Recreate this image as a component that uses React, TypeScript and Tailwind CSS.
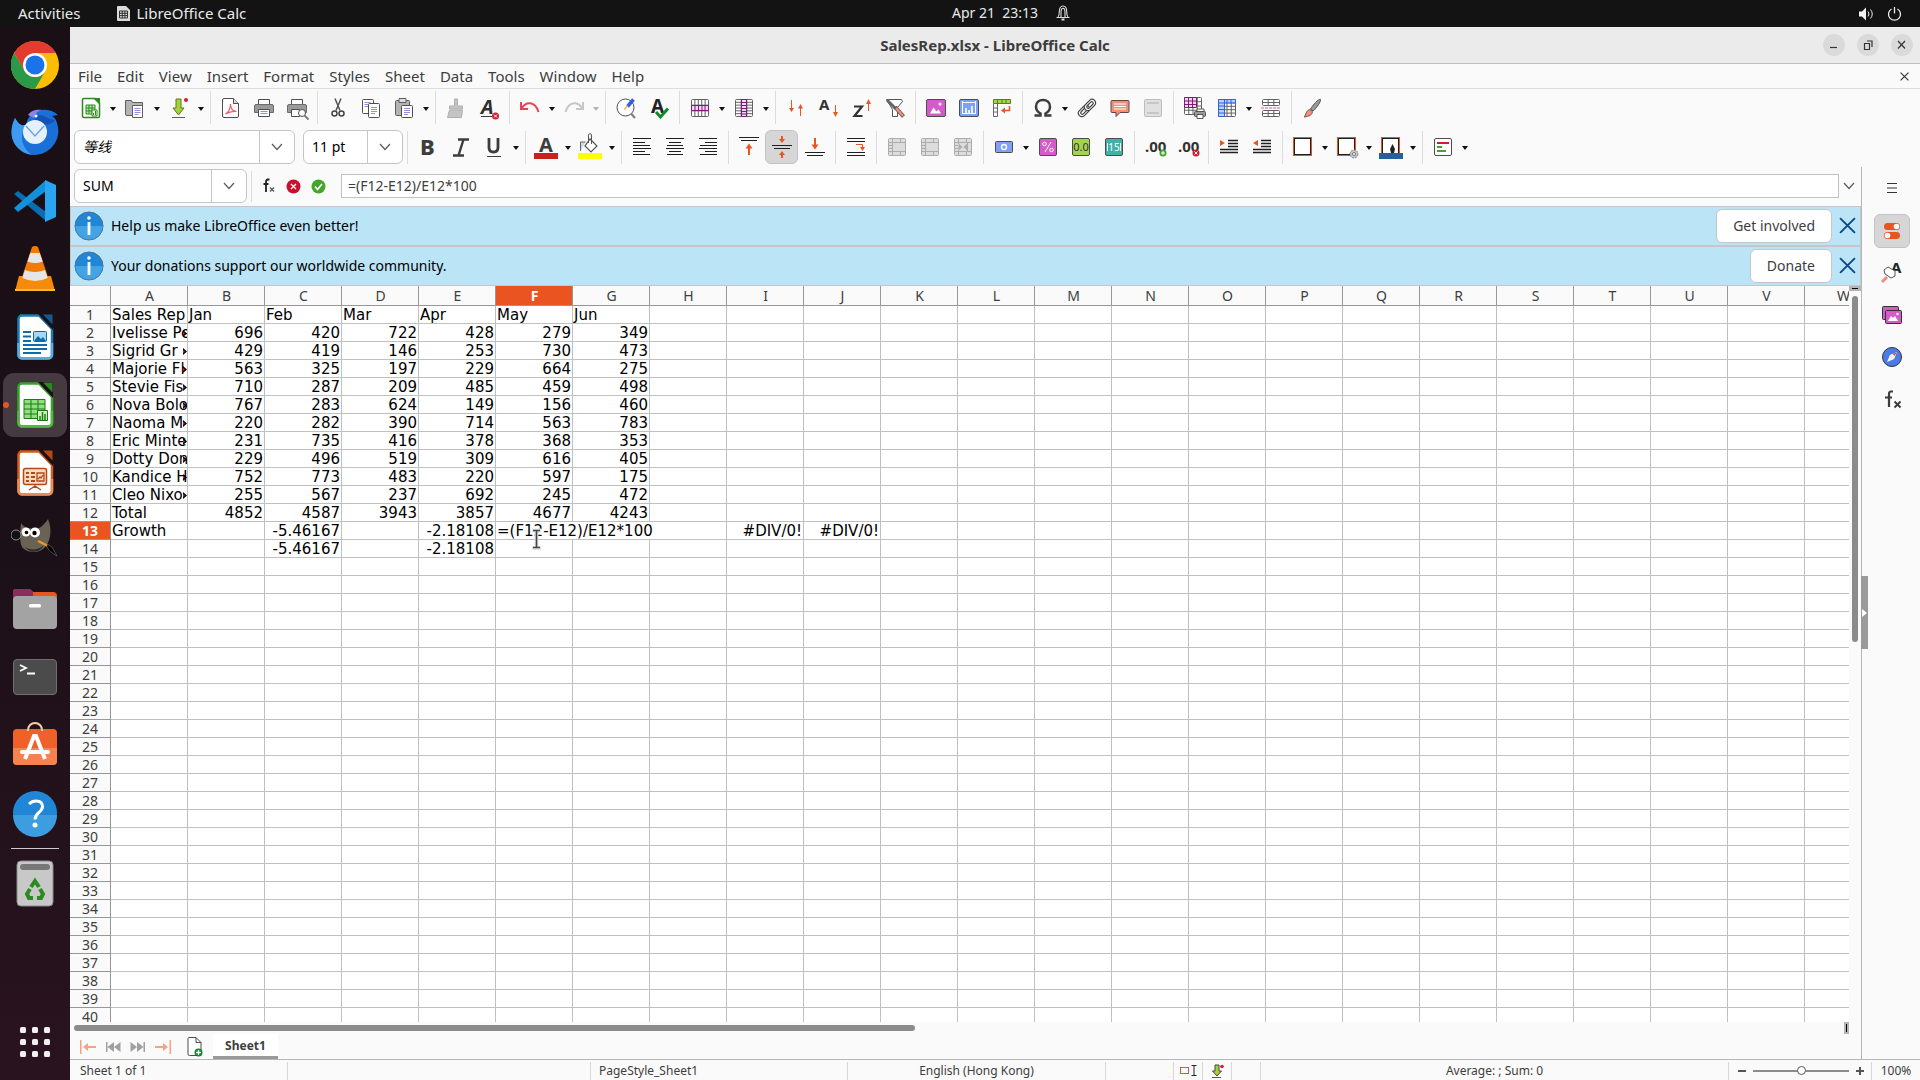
import { type ReactNode } from "react";

const INK = "#3d3d3d";
const ORANGE = "#e95420";

const gridLines = (x: number, y: number, w: number, h: number, cols: number, rows: number, color: string) => {
  const parts: string[] = [];
  for (let i = 1; i < cols; i++) parts.push(`M${x + (w / cols) * i} ${y}v${h}`);
  for (let i = 1; i < rows; i++) parts.push(`M${x} ${y + (h / rows) * i}h${w}`);
  return (
    <>
      <rect x={x} y={y} width={w} height={h} rx="1" fill="#fff" stroke={color} />
      <path d={parts.join("")} stroke={color} />
    </>
  );
};

const mergeBase = (
  <>
    <rect x="3.5" y="3.5" width="17" height="17" rx="1" fill="#dcdcdc" stroke="#adadad" />
    <path d="M3.5 7.5h17M3.5 16.5h17M7.5 3.5v17M15.5 3.5v4M15.5 16.5v4M3.5 10.5h4M3.5 13.5h4" stroke="#adadad" />
  </>
);

const borderBox = (
  <>
    <rect x="2.5" y="2.5" width="18" height="18" fill="none" stroke={ORANGE} />
    <rect x="3.5" y="3.5" width="16" height="16" fill="#fff" stroke="#1f1f1f" />
  </>
);

const icons: Record<string, ReactNode> = {
  new: (
    <>
      <path d="M5 2.500h11l4.500 4.500V20a1.500 1.500 0 0 1-1.500 1.500H5A1.500 1.500 0 0 1 3.500 20V4A1.500 1.500 0 0 1 5 2.500z" fill="#fff" stroke="#2b8a1e" strokeWidth="1.500" />
      <path d="M14 2h7v7z" fill="#2b8a1e" />
      <path d="M7 9h9v9H7zM7 12h9M7 15h9M10 9v9M13 9v9" stroke="#2b8a1e" fill="#b9e8ae" />
      <path d="M13 14h5v6h-5z" fill="#fff" stroke="#2b8a1e" />
      <path d="M14.500 19v-2M16.500 19v-4" stroke="#2b8a1e" />
    </>
  ),
  open: (
    <>
      <path d="M2.500 4.500h6l1 2h10v13H4a1.500 1.500 0 0 1-1.500-1.500z" fill="#b4b4b4" stroke="#5e5e5e" />
      <path d="M9.500 9.500h10v12h-10z" fill="#fff" stroke="#5e5e5e" />
      <path d="M11.500 12.500h6M11.500 14.500h6M11.500 16.500h6M11.500 18.500h4" stroke="#8f93dd" />
    </>
  ),
  save: (
    <>
      <path d="M9 3h5v9h3l-5.500 7L6 12h3z" fill="#a4d13a" stroke="#5a7a1c" />
      <path d="M5 21.500h13" stroke="#5e5e5e" />
      <circle cx="19" cy="4" r="2" fill="#d01c33" />
    </>
  ),
  pdf: (
    <>
      <path d="M5 2.500h9.500l5 5V20a1.500 1.500 0 0 1-1.500 1.500H5A1.500 1.500 0 0 1 3.500 20V4A1.500 1.500 0 0 1 5 2.500z" fill="#fff" stroke="#4d4d4d" />
      <path d="M14.500 2.500v5h5" fill="#ddd" stroke="#4d4d4d" />
      <path d="M6.500 18c3-2 5-6 5-10 0 5 2 7 6 7.500-4-.5-7 0-11 2.500z" fill="none" stroke="#ea5a6a" strokeWidth="1.200" />
    </>
  ),
  print: (
    <>
      <path d="M6.500 3.500h11v5h-11z" fill="#fff" stroke="#4d4d4d" />
      <path d="M4 8.500h16a1.500 1.500 0 0 1 1.500 1.500v6.500h-19V10A1.500 1.500 0 0 1 4 8.500z" fill="#9a9a9a" stroke="#6b6b6b" />
      <path d="M6.500 13.500h11v7h-11z" fill="#fff" stroke="#4d4d4d" />
      <path d="M8.500 15.500h7M8.500 17.500h7" stroke="#8f93dd" />
    </>
  ),
  preview: (
    <>
      <path d="M6.500 3.500h11v5h-11z" fill="#fff" stroke="#4d4d4d" />
      <path d="M4 8.500h16a1.500 1.500 0 0 1 1.500 1.500v6.500h-19V10A1.500 1.500 0 0 1 4 8.500z" fill="#9a9a9a" stroke="#6b6b6b" />
      <path d="M6.500 13.500h8v7h-8z" fill="#fff" stroke="#4d4d4d" />
      <circle cx="17" cy="17" r="3.500" fill="#fff" stroke="#4d4d4d" />
      <path d="M19.500 19.500l4 4" stroke="#777" strokeWidth="1.800" />
    </>
  ),
  cut: (
    <>
      <path d="M9 2.500l5 12M15 2.500l-5 12" stroke="#555" strokeWidth="1.500" />
      <circle cx="8.500" cy="17.500" r="2.500" fill="none" stroke="#444" strokeWidth="1.500" />
      <circle cx="15.500" cy="17.500" r="2.500" fill="none" stroke="#444" strokeWidth="1.500" />
    </>
  ),
  copy: (
    <>
      <rect x="3.500" y="3.500" width="11" height="14" rx="1" fill="#fff" stroke="#4d4d4d" />
      <path d="M5.500 6.500h6M5.500 8.500h6M5.500 10.500h6" stroke="#8f93dd" />
      <rect x="9.500" y="7.500" width="11" height="14" rx="1" fill="#fff" stroke="#4d4d4d" />
      <path d="M12 11.500h6M12 13.500h6M12 15.500h6M12 17.500h4" stroke="#8f93dd" />
    </>
  ),
  paste: (
    <>
      <rect x="3.500" y="4.500" width="14" height="15" rx="1" fill="#b4b4b4" stroke="#5e5e5e" />
      <path d="M7 2.500h7v4H7z" fill="#ddd" stroke="#5e5e5e" />
      <rect x="9.500" y="9.500" width="11" height="12" rx="1" fill="#fff" stroke="#4d4d4d" />
      <path d="M12 12.500h6M12 14.500h6M12 16.500h6M12 18.500h4" stroke="#8f93dd" />
    </>
  ),
  clone: <path d="M10.500 3h3v7h5v3h-13v-3h5zM5.500 14h13l-1 7.500h-14z" fill="#c4c4c4" stroke="#b0b0b0" />,
  clear: (
    <>
      <text x="4" y="18" fontSize="20" fontWeight="700" fontStyle="italic" fill="#2e2e2e">A</text>
      <path d="M4 20.500h12" stroke={INK} />
      <circle cx="18.500" cy="20" r="3.500" fill="#d01c33" />
      <path d="M17 18.500l3 3M20 18.500l-3 3" stroke="#fff" />
    </>
  ),
  undo: <path d="M3 6v7h7M3.500 12.500C8 5 17 5 20.500 16" fill="none" stroke="#ea4255" strokeWidth="2" />,
  redo: <path d="M21 6v7h-7M20.500 12.500C16 5 7 5 3.500 16" fill="none" stroke="#c6c6c6" strokeWidth="2" />,
  find: (
    <>
      <circle cx="11.500" cy="11.500" r="8.500" fill="#fff" stroke="#4d4d4d" />
      <path d="M17 17.500l4 4.500" stroke="#808080" strokeWidth="2.200" />
      <path d="M19.500 3.500l-6 7" stroke="#2f62dc" strokeWidth="3.500" />
      <path d="M13.500 9.500l-3 4" stroke="#f0b070" strokeWidth="1.500" />
    </>
  ),
  spell: (
    <>
      <text x="4" y="17" fontSize="19" fontWeight="700" fill="#222">A</text>
      <path d="M9 16l4.500 5L21 12.500" fill="none" stroke="#13882a" strokeWidth="3" />
    </>
  ),
  row: (
    <>
      {gridLines(3.5, 3.5, 17, 17, 5, 3, "#636363")}
      <path d="M3.500 9.500h17v5h-17zM7 9.500v5M10.500 9.500v5M14 9.500v5M17 9.500v5" fill="#f4d3f1" stroke="#7a1c78" />
    </>
  ),
  column: (
    <>
      {gridLines(3.5, 3.5, 17, 17, 3, 6, "#636363")}
      <path d="M9.500 3.500h5v17h-5zM9.500 6.500h5M9.500 9.500h5M9.500 12.500h5M9.500 15.500h5M9.500 18h5" fill="#f4d3f1" stroke="#7a1c78" />
    </>
  ),
  sort: (
    <>
      <path d="M7.500 4v8" stroke={ORANGE} />
      <path d="M5 12h5l-2.500 4z" fill={ORANGE} />
      <path d="M16.500 20v-8" stroke={ORANGE} />
      <path d="M14 12.500h5L16.500 8z" fill={ORANGE} />
    </>
  ),
  asc: (
    <>
      <text x="2" y="14" fontSize="15" fontWeight="700" fill="#333">A</text>
      <path d="M18.500 9v8" stroke={ORANGE} />
      <path d="M16 16h5l-2.500 5z" fill={ORANGE} />
    </>
  ),
  desc: (
    <>
      <path d="M4 10.500h8L4.500 20H12.500" fill="none" stroke="#333" strokeWidth="2.200" />
      <path d="M18.500 15V6" stroke={ORANGE} />
      <path d="M16 8h5l-2.500-5z" fill={ORANGE} />
    </>
  ),
  filter: (
    <>
      <path d="M3.500 3.500h15l1 2-5 6v9h-5v-7z" fill="#fff" stroke="#555" />
      <path d="M4 4l9 9" stroke="#666" strokeWidth="3" />
      <path d="M12 11l8.500 9.500" stroke="#555" strokeWidth="4" />
      <path d="M13 12l7 8" stroke="#f58b7a" strokeWidth="2.500" />
    </>
  ),
  image: (
    <>
      <rect x="2.500" y="3.500" width="19" height="17" rx="1.500" fill="#d55bcb" stroke="#4d4d4d" />
      <path d="M6 17.500l3.500-6 3 4 2-2 2.500 4z" fill="#fff" />
      <circle cx="16" cy="8" r="1.500" fill="#fff" />
    </>
  ),
  chart: (
    <>
      <rect x="2.500" y="3.500" width="19" height="17" rx="1.500" fill="#7ea2f5" stroke="#4d4d4d" />
      <path d="M5 6.500h14M5.500 5v13M5 17.500h14M18.500 5v13" stroke="#fff" />
      <path d="M9 17v-5M12 17v-3M15 17V10" stroke="#fff" strokeWidth="1.600" />
    </>
  ),
  pivot: (
    <>
      <path d="M3.500 3.500h17v4h-17z" fill="#a4d44b" stroke="#5c7c25" />
      <path d="M7.500 3.500v4M12 3.500v4M16 3.500v4" stroke="#5c7c25" />
      <path d="M3.500 7.500h4v13h-4zM3.500 12h4M3.500 16h4" fill="#fff" stroke="#666" />
      <path d="M19.500 10v4.500H14" fill="none" stroke={ORANGE} strokeWidth="1.500" />
      <path d="M15 11.500v6l-4-3z" fill={ORANGE} />
    </>
  ),
  omega: <path d="M3.500 19.500h6v-2C6.500 16 5 13.500 5 10.800 5 6.500 8 4 12 4s7 2.500 7 6.800c0 2.700-1.500 5.200-4.500 6.700v2h6" fill="none" stroke={INK} strokeWidth="2.500" />,
  link: (
    <g fill="#fff" stroke="#444" strokeWidth="1.200">
      <path fillRule="evenodd" transform="rotate(-45 9 15)" d="M6 11.500h6a3.500 3.500 0 0 1 0 7H6a3.500 3.500 0 0 1 0-7zM6.500 13.500a1.500 1.500 0 0 0 0 3h5a1.500 1.500 0 0 0 0-3z" />
      <path fillRule="evenodd" transform="rotate(-45 15 9)" d="M12 5.500h6a3.500 3.500 0 0 1 0 7h-6a3.500 3.500 0 0 1 0-7zM12.500 7.500a1.500 1.500 0 0 0 0 3h5a1.500 1.500 0 0 0 0-3z" />
    </g>
  ),
  comment: (
    <>
      <path d="M4 4.500h16a1 1 0 0 1 1 1v10a1 1 0 0 1-1 1h-8l-4 4v-4H4a1 1 0 0 1-1-1v-10a1 1 0 0 1 1-1z" fill="#f58b7a" stroke="#5b4a48" />
      <path d="M6 8h12M6 10.500h12M6 13h12" stroke="#fff" />
    </>
  ),
  headers: (
    <>
      <rect x="3.500" y="3.500" width="17" height="17" rx="1.500" fill="#e0e0e0" stroke="#bdbdbd" />
      <path d="M6 7h12M6 17h12" stroke="#bdbdbd" strokeWidth="1.500" />
    </>
  ),
  printarea: (
    <>
      {gridLines(2.5, 1.5, 17, 17, 4, 4, "#636363")}
      <path d="M2.500 1.500h12v10h-12zM6.500 1.500v10M10.500 1.500v10M2.500 5h12M2.500 8.500h12" fill="#f4d3f1" stroke="#7a1c78" />
      <path d="M15 13h7v4h-7z" fill="#fff" stroke="#555" />
      <rect x="12.500" y="15.500" width="11" height="5" rx="1" fill="#9a9a9a" stroke="#555" />
      <path d="M15 18.500h6v4h-6z" fill="#fff" stroke="#555" />
    </>
  ),
  freeze: (
    <>
      {gridLines(3.5, 3.5, 17, 17, 4, 5, "#636363")}
      <path d="M3.500 3.500h17v3.400h-11v13.600h-6zM3.500 7h6M3.500 10h6M3.500 13.500h6M3.500 17h6M12 3.500v3.400M16 3.500v3.400M9.500 3.500v3.400" fill="#bcd0fb" stroke="#2f62dc" />
    </>
  ),
  split: (
    <>
      {gridLines(3.5, 3.5, 17, 6, 3, 2, "#636363")}
      {gridLines(3.5, 14.5, 17, 6, 3, 2, "#636363")}
      <path d="M2 12h20" stroke="#d55bcb" strokeDasharray="3 1" />
    </>
  ),
  draw: (
    <>
      <path d="M20.500 3.500c1 1-4 9-7.500 11.500l-2.500-2C12.500 9.500 19 2 20.500 3.500z" fill="#9a9a9a" stroke="#555" />
      <path d="M10 13.500l2.500 2c0 3-3 5-8.500 5.500 2-1.500 2-7 6-7.500z" fill="#f58b7a" stroke="#7a5550" />
    </>
  ),
  bold: <text x="4" y="20" fontSize="22" fontWeight="800" fill={INK}>B</text>,
  italic: <path d="M9 4.500h11M4 20.500h11M14.500 4.500l-5 16" stroke={INK} strokeWidth="2.400" />,
  underline: (
    <>
      <path d="M7 3v9.500c0 3 1.500 4.500 4.500 4.500s4.500-1.500 4.500-4.500V3" fill="none" stroke={INK} strokeWidth="2.800" />
      <path d="M5 21.500h14" stroke={INK} />
    </>
  ),
  fontcolor: (
    <>
      <text x="5" y="17" fontSize="20" fontWeight="700" fill={INK}>A</text>
      <path d="M0 18h24v6H0z" fill="#c9211e" />
    </>
  ),
  fill: (
    <>
      <path d="M2.500 16V7h5" fill="#bcdff4" stroke="#666" />
      <path d="M12 4l7 7-6 6-6-6z" fill="#fff" stroke="#555" strokeWidth="1.200" />
      <path d="M10.500 8V-.5a2 2 0 0 1 3 0V9" fill="none" stroke="#555" />
      <path d="M0 18h24v6H0z" fill="#ff0" />
    </>
  ),
  left: <path d="M3 3.500h18M3 7.500h12M3 10.500h17M3 13.500h18M3 16.500h12M3 19.500h17" stroke="#1f1f1f" />,
  center: <path d="M3 3.500h18M6 7.500h12M4 10.500h16M3 13.500h18M6 16.500h12M4 19.500h16" stroke="#1f1f1f" />,
  right: <path d="M3 3.500h18M9 7.500h12M4 10.500h17M3 13.500h18M9 16.500h12M4 19.500h17" stroke="#1f1f1f" />,
  top: (
    <>
      <path d="M2 2.500h20M4 5.500h16" stroke="#1f1f1f" />
      <path d="M12 20v-7" stroke={ORANGE} strokeWidth="2" />
      <path d="M8.500 13.500h7L12 8.500z" fill={ORANGE} />
    </>
  ),
  middle: (
    <>
      <path d="M2 10.500h20M4 13.500h16" stroke="#1f1f1f" />
      <path d="M12 1v4M12 23v-4" stroke={ORANGE} strokeWidth="2" />
      <path d="M9 4h6l-3 4zM9 20h6l-3-4z" fill={ORANGE} />
    </>
  ),
  bottom: (
    <>
      <path d="M2 17.500h20M4 20.500h16" stroke="#1f1f1f" />
      <path d="M12 3v7" stroke={ORANGE} strokeWidth="2" />
      <path d="M8.500 9.500h7L12 14.500z" fill={ORANGE} />
    </>
  ),
  wrap: (
    <>
      <path d="M3 3.500h18M3 6.500h18M3 17.500h18M3 20.500h18" stroke="#1f1f1f" />
      <path d="M12 9.500h6.500v3" fill="none" stroke={ORANGE} />
      <path d="M16 12h5l-2.500 4z" fill={ORANGE} />
    </>
  ),
  merge1: mergeBase,
  merge2: mergeBase,
  merge3: (
    <>
      {mergeBase}
      <path d="M7 9h9v6H7z" fill="#dcdcdc" />
      <path d="M16.500 7.500v9M8 9.500l3 2.500-3 2.500zM16 9.500L13 12l3 2.500z" fill="#adadad" stroke="#adadad" />
    </>
  ),
  currency: (
    <>
      <rect x="3.500" y="6.500" width="17" height="11" rx="1" fill="#7ea2f5" stroke="#4d4d4d" />
      <circle cx="12" cy="12" r="2.500" fill="none" stroke="#fff" strokeWidth="1.300" />
    </>
  ),
  percent: (
    <>
      <rect x="3.500" y="3.500" width="17" height="17" rx="1.500" fill="#d55bcb" stroke="#4d4d4d" />
      <circle cx="8.500" cy="9" r="1.800" fill="none" stroke="#fff" />
      <circle cx="15.500" cy="15" r="1.800" fill="none" stroke="#fff" />
      <path d="M15 7l-6 10" stroke="#fff" />
    </>
  ),
  number: (
    <>
      <rect x="3.500" y="3.500" width="17" height="17" rx="1.500" fill="#a4d44b" stroke="#4d4d4d" />
      <text x="12" y="16" fontSize="11" textAnchor="middle" fill="#333">0.0</text>
    </>
  ),
  date: (
    <>
      <rect x="3.500" y="3.500" width="17" height="17" rx="1.500" fill="#41b2a8" stroke="#4d4d4d" />
      <text x="12" y="16" fontSize="10" textAnchor="middle" fill="#fff">15</text>
      <path d="M5.500 8v8M18.500 8v8" stroke="#fff" />
    </>
  ),
  adddec: (
    <>
      <text x="2" y="17" fontSize="15" fontWeight="700" fill="#333">.00</text>
      <circle cx="20" cy="18" r="3.500" fill="#43a52c" />
      <path d="M18 18h4M20 16v4" stroke="#fff" />
    </>
  ),
  deldec: (
    <>
      <text x="2" y="17" fontSize="15" fontWeight="700" fill="#333">.00</text>
      <circle cx="20" cy="18" r="3.500" fill="#d01c33" />
      <path d="M18.500 16.500l3 3M21.500 16.500l-3 3" stroke="#fff" />
    </>
  ),
  indent: (
    <>
      <path d="M11 5.500h10M11 8.500h10M11 11.500h10M3 14.500h18M3 17.500h18" stroke="#1f1f1f" strokeWidth="1.300" />
      <path d="M3 5l5 3-5 3z" fill={ORANGE} />
    </>
  ),
  outdent: (
    <>
      <path d="M11 5.500h10M11 8.500h10M11 11.500h10M3 14.500h18M3 17.500h18" stroke="#1f1f1f" strokeWidth="1.300" />
      <path d="M8 5L3 8l5 3z" fill={ORANGE} />
    </>
  ),
  borders: borderBox,
  borderstyle: (
    <>
      {borderBox}
      <circle cx="19" cy="19" r="4" fill="#c4c4c4" stroke="#888" strokeDasharray="2 1" />
      <circle cx="19" cy="19" r="1.500" fill="#fff" stroke="#777" />
    </>
  ),
  bordercolor: (
    <>
      {borderBox}
      <path d="M13.500 9l2.500 5-1 4h-3l-1-4z" fill="#222" />
      <path d="M0 18h24v6H0z" fill="#2a6099" />
    </>
  ),
  conditional: (
    <>
      <rect x="3.500" y="3.500" width="17" height="17" rx="1.500" fill="#fff" stroke="#4d4d4d" />
      <path d="M6 8h12" stroke="#d01c33" strokeWidth="2" />
      <path d="M6 12h5M6 16h9" stroke="#43a52c" strokeWidth="2" />
    </>
  ),
};

const standardBar = "new ▾ open ▾ save ▾ | pdf print preview | cut copy paste ▾ | clone clear | undo ▾ redo ▿ | find spell | row ▾ column ▾ | sort asc desc filter | image chart pivot | omega ▾ link comment headers | printarea freeze ▾ split | draw".split(" ");
const formatBar = "| bold italic underline ▾ | fontcolor ▾ fill ▾ | left center right | top middle bottom | wrap | merge1 merge2 merge3 | currency ▾ percent number date | adddec deldec | indent outdent | borders ▾ borderstyle ▾ bordercolor ▾ | conditional ▾".split(" ");

const menus = ["File", "Edit", "View", "Insert", "Format", "Styles", "Sheet", "Data", "Tools", "Window", "Help"];

const columns = "ABCDEFGHIJKLMNOPQRSTUVW".split("");

const rows: (string | number)[][] = [
  ["Sales Rep", "Jan", "Feb", "Mar", "Apr", "May", "Jun"],
  ["Ivelisse Pe", 696, 420, 722, 428, 279, 349],
  ["Sigrid Gr", 429, 419, 146, 253, 730, 473],
  ["Majorie Fl", 563, 325, 197, 229, 664, 275],
  ["Stevie Fis", 710, 287, 209, 485, 459, 498],
  ["Nova Bolo", 767, 283, 624, 149, 156, 460],
  ["Naoma M", 220, 282, 390, 714, 563, 783],
  ["Eric Minte", 231, 735, 416, 378, 368, 353],
  ["Dotty Don", 229, 496, 519, 309, 616, 405],
  ["Kandice H", 752, 773, 483, 220, 597, 175],
  ["Cleo Nixo", 255, 567, 237, 692, 245, 472],
  ["Total", 4852, 4587, 3943, 3857, 4677, 4243],
  ["Growth", "", -5.46167, "", -2.18108, "", "", "", "#DIV/0!", "#DIV/0!"],
  ["", "", -5.46167, "", -2.18108],
];

function ToolStrip({ items }: { items: string[] }) {
  return (
    <>
      {items.map((item, i) => {
        if (item === "|") return <div key={i} className="mr-[3px] ml-1 h-[33px] w-px shrink-0 bg-[#dcdcdc]" />;
        if (item === "▾" || item === "▿") {
          return (
            <button key={i} aria-label="More options" className="flex h-[34px] w-[11px] shrink-0 items-center justify-center pt-[3px]">
              <svg width="8" height="5" viewBox="0 0 8 5"><path d="M1 0h6L4 4z" fill={item === "▾" ? "#111" : "#b5b5b5"} /></svg>
            </button>
          );
        }
        return (
          <button
            key={i}
            aria-label={item}
            className={`flex h-[34px] w-[33px] shrink-0 items-center justify-center rounded-md ${item === "middle" ? "border border-[#c2c2c2] bg-[#d6d6d6]" : ""}`}
          >
            <svg width="24" height="24" viewBox="0 0 24 24" fill="none" className="shrink-0 overflow-visible">{icons[item]}</svg>
          </button>
        );
      })}
    </>
  );
}

function Chevron() {
  return (
    <svg width="12" height="8" viewBox="0 0 12 8" fill="none">
      <path d="M1 1l5 5.500L11 1" stroke="#5a5a5a" strokeWidth="1.200" />
    </svg>
  );
}

function Combo({ label, value, className }: { label: string; value: string; className: string }) {
  return (
    <div className={`relative flex h-[34px] shrink-0 items-center rounded-md border border-[#c6c6c6] bg-white ${className}`}>
      <select aria-label={label} defaultValue={value} className="h-full w-full appearance-none bg-transparent pb-px pl-2 text-[14px] text-black">
        <option>{value}</option>
      </select>
      <div className="pointer-events-none absolute inset-y-0 right-0 flex w-[35px] items-center justify-center border-l border-[#c6c6c6]">
        <Chevron />
      </div>
    </div>
  );
}

function CloseX({ size, color, width }: { size: number; color: string; width: number }) {
  return (
    <svg width={size} height={size} viewBox="0 0 16 16">
      <path d="M1 1l14 14M15 1L1 15" stroke={color} strokeWidth={width} />
    </svg>
  );
}

function InfoBar({ text, action }: { text: string; action: string }) {
  return (
    <div className="flex h-10 items-center border border-[#c6c6c6] bg-[#bbe4f6] pr-1 pb-px pl-[3px]">
      <svg width="30" height="30" viewBox="0 0 30 30" className="shrink-0">
        <circle cx="15" cy="15" r="14" fill="#2286d6" stroke="#4a6f96" />
        <path d="M1.500 15h27a13.500 13.500 0 0 1-27 0z" fill="#43a3e3" />
        <circle cx="15" cy="7" r="1.800" fill="#fff" />
        <path d="M15 11v13" stroke="#fff" strokeWidth="2.800" />
      </svg>
      <p className="ml-[7px] flex-1 text-[14px] text-black">{text}</p>
      <button className="h-[34px] rounded-md border border-[#c6c6c6] bg-white px-4 text-[14px] text-[#3d3d3d]">{action}</button>
      <button aria-label="Close" className="ml-[7px]"><CloseX size={17} color="#0b4a86" width={1.8} /></button>
    </div>
  );
}

const docIcon = (dark: string, main: string, light: string, body: ReactNode) => (
  <svg width="48" height="48" viewBox="0 0 48 48" fill="none">
    <path d="M9 2.500h19L41 16v26a3.500 3.500 0 0 1-3.500 3.500h-26A3.500 3.500 0 0 1 7.500 42V6A3.500 3.500 0 0 1 11 2.500z" fill="#fff" stroke={main} strokeWidth="2.500" />
    <path d="M27 1h13.500A1.500 1.500 0 0 1 42 2.500V17z" fill="#1c1017" />
    <path d="M32 1.500h8.500a1 1 0 0 1 1 1v9z" fill={dark} />
    <path d="M7.500 30v12a3.500 3.500 0 0 0 3.500 3.500h26.500A3.500 3.500 0 0 0 41 42V30" stroke={light} strokeWidth="2.500" />
    {body}
  </svg>
);

const apps: { name: string; active?: boolean; icon: ReactNode }[] = [
  {
    name: "Google Chrome",
    icon: (
      <svg width="48" height="48" viewBox="0 0 48 48">
        <circle cx="24" cy="24" r="24" fill="#fbbc04" />
        <path d="M24 12h20.800A24 24 0 0 0 3.200 12l10.400 18z" fill="#e33b2e" />
        <path d="M3.200 12A24 24 0 0 0 24 48l10.400-18A12 12 0 0 1 13.600 30z" fill="#2a9a48" />
        <circle cx="24" cy="24" r="12" fill="#fff" />
        <circle cx="24" cy="24" r="9.500" fill="#1a73e8" />
      </svg>
    ),
  },
  {
    name: "Thunderbird",
    icon: (
      <svg width="48" height="48" viewBox="0 0 48 48">
        <path d="M4 9c-5 10-5 22 3 30 8 9 23 9 32 1 8-7 10-17 7-26-1-4-3-6-5-7l6-1C41 0 29-1 22 4c-5 4-6 8-7 12-4 1-7 0-11-7z" fill="#1a6fd8" />
        <path d="M4 9c-5 10-5 22 3 30 4 4 9 6 14 7C10 38 8 26 15 16 11 17 8 16 4 9z" fill="#3d9bf0" />
        <path d="M28 6c6 0 10 5 16 5-3 5-12 6-18 3-3-3-2-7 2-8z" fill="#1552b8" />
        <path d="M17 6c3-5 9-6 14-5-5 1-7 4-8 8z" fill="#8d84e8" />
        <circle cx="24" cy="23" r="12" fill="#e4f1fd" />
        <path d="M15 17l9 10 9-10" fill="none" stroke="#6aa6e4" strokeWidth="1.500" />
        <circle cx="25" cy="7" r="1.500" fill="#fff" />
      </svg>
    ),
  },
  {
    name: "Visual Studio Code",
    icon: (
      <svg width="48" height="48" viewBox="0 0 48 48">
        <path d="M3 17l4-3 28 21v9z" fill="#0b6cb0" />
        <path d="M3 31l4 4L35 14V3z" fill="#1190dc" />
        <path d="M34 3l11 5v32l-11 5z" fill="#2aa5f2" />
      </svg>
    ),
  },
  {
    name: "VLC",
    icon: (
      <svg width="48" height="48" viewBox="0 0 48 48">
        <path d="M8 31h32l4 15H4z" fill="#f58a0b" />
        <path d="M4 44h40v2H4z" fill="#ffb833" />
        <path d="M21 2q3-2 6 0l10 30q-13 7-26 0z" fill="#f07c06" />
        <path d="M19.300 8h9.400l3 8.500q-7.500 3-15.200 0zM14 25q10 4 20 0l2.700 8q-12.500 6-25.300 0z" fill="#e6e6e6" />
      </svg>
    ),
  },
  {
    name: "LibreOffice Writer",
    icon: docIcon("#0f5b92", "#1d7ab5", "#5aaede", (
      <>
        <path d="M12 19h8M12 23.500h8M12 28h8M12 32h24M12 36h24M12 40h18" stroke="#0f6aa6" strokeWidth="2" />
        <rect x="22.500" y="18.500" width="13" height="10" rx="1" fill="#a8d6f2" stroke="#0f6aa6" />
        <path d="M23 28l4-5 3 3 2-2 3 4z" fill="#0f6aa6" />
      </>
    )),
  },
  {
    name: "LibreOffice Calc",
    active: true,
    icon: docIcon("#2a8a1e", "#37a32b", "#4fb83e", (
      <>
        <path d="M13 18.500h21v19H13zM13 23h21M13 28h21M13 33h21M20 18.500v19M27 18.500v19" fill="#8fe07f" stroke="#1f7a14" />
        <path d="M26.500 29.500h10v10h-10z" fill="#c9f5bf" stroke="#1f7a14" />
        <path d="M29 39v-4M31.500 39v-8M34 39v-6" stroke="#1f7a14" strokeWidth="1.500" />
      </>
    )),
  },
  {
    name: "LibreOffice Impress",
    icon: docIcon("#b44a12", "#cf5c1c", "#ec8a52", (
      <>
        <rect x="12.500" y="19.500" width="23" height="16" rx="2" fill="#fbd9c4" stroke="#b44a12" strokeWidth="1.500" />
        <path d="M15 24h3M15 28h3M15 32h3M20 24h4M20 28h4M20 32h4" stroke="#b44a12" strokeWidth="2" />
        <path d="M26 24h7v8h-7zM27 30l2-2 1 1 2-3M24 36v3M18 41l6-4 6 4" stroke="#b44a12" strokeWidth="1.300" />
      </>
    )),
  },
  {
    name: "GIMP",
    icon: (
      <svg width="48" height="48" viewBox="0 0 48 48">
        <path d="M10 6c4 6 8 5 13 6 6 0 10-4 14-10 4 10 3 20-2 27-6 8-17 7-22 3-5-3-4-15-3-26z" fill="#6a6355" />
        <path d="M14 30c6 4 14 3 19-2-4 8-14 9-19 2z" fill="#2e2a24" />
        <circle cx="15" cy="15" r="4.500" fill="#fff" />
        <circle cx="24" cy="15.500" r="5" fill="#fff" />
        <circle cx="15.500" cy="15.500" r="1.800" />
        <circle cx="23.500" cy="16" r="2.200" />
        <circle cx="5" cy="18" r="5" fill="#111" stroke="#aaa" strokeWidth=".8" />
        <path d="M27 24l10 5" stroke="#f2962d" strokeWidth="2.500" />
        <path d="M36 27l5 3 5 9c-5-3-8-5-10-9z" fill="#000" stroke="#777" strokeWidth=".6" />
      </svg>
    ),
  },
  {
    name: "Files",
    icon: (
      <svg width="48" height="48" viewBox="0 0 48 48">
        <path d="M5 4h14l3 3h20a4 4 0 0 1 4 4v10H2V7a3 3 0 0 1 3-3z" fill={ORANGE} />
        <path d="M5 4h14l3 3v12H2V7a3 3 0 0 1 3-3z" fill="#8a2c5c" />
        <rect x="2" y="11" width="44" height="33" rx="4" fill="#a3a3a3" />
        <rect x="18" y="19" width="12" height="3.500" rx="1.500" fill="#fff" />
      </svg>
    ),
  },
  {
    name: "Terminal",
    icon: (
      <svg width="48" height="48" viewBox="0 0 48 48" fill="none">
        <rect x="2.500" y="6.500" width="43" height="35" rx="3.500" fill="#4b4b4b" stroke="#6f6f6f" />
        <path d="M9 12l6 3-6 3M16 20.500h8" stroke="#fff" strokeWidth="1.800" />
      </svg>
    ),
  },
  {
    name: "Ubuntu Software",
    icon: (
      <svg width="48" height="48" viewBox="0 0 48 48" fill="none">
        <rect x="2" y="8" width="44" height="36" rx="4" fill="#f0612a" />
        <path d="M2 27h44v13a4 4 0 0 1-4 4H6a4 4 0 0 1-4-4z" fill="#f5824f" />
        <path d="M17 10V9a7 7 0 0 1 14 0v1" stroke="#f7cfa6" strokeWidth="2" />
        <path d="M14 38l9-23h2l9 23" stroke="#fff" strokeWidth="4" />
        <path d="M11 31h26" stroke="#fff" strokeWidth="4" strokeLinecap="round" />
      </svg>
    ),
  },
  {
    name: "Help",
    icon: (
      <svg width="48" height="48" viewBox="0 0 48 48" fill="none">
        <circle cx="24" cy="24" r="22" fill="#2286d6" />
        <path d="M2 26h44a22 22 0 0 1-44 0z" fill="#3c9de0" />
        <path d="M18 15c2-2 4-3 7-3 4 0 6.500 2 6.500 5.500 0 6-7.500 6-7.500 13" stroke="#fff" strokeWidth="3" />
        <circle cx="24" cy="36" r="2.500" fill="#fff" />
      </svg>
    ),
  },
];

function Dock() {
  return (
    <nav className="flex w-[70px] shrink-0 flex-col items-center bg-linear-to-b from-[#1a0f15] via-[#1c1018] to-[#29131f] pt-[6px]">
      <div className="flex w-full flex-col items-center gap-1">
        {apps.map((app) => (
          <button
            key={app.name}
            aria-label={app.name}
            className={`relative flex size-16 items-center justify-center rounded-[11px] ${app.active ? "bg-[#443a40]" : ""}`}
          >
            {app.active && <span className="absolute top-[29px] left-0 size-[6px] rounded-full bg-[#e95420]" />}
            {app.icon}
          </button>
        ))}
      </div>
      <div className="mt-[3px] h-px w-12 bg-[#cfcbcd]" />
      <button aria-label="Trash" className="mt-[3px] flex size-16 items-center justify-center">
        <svg width="48" height="48" viewBox="0 0 48 48" fill="none">
          <rect x="6" y="1" width="36" height="45" rx="4" fill="#c8c8c8" stroke="#8a8a8a" />
          <rect x="9" y="4" width="30" height="6" rx="3" fill="#777" />
          <g stroke="#2c8a22" strokeWidth="4">
            <path d="M20 27l4-6 4 6" />
            <path d="M29 29l3 5-2 4h-4" />
            <path d="M22 38h-4l-2-4 3-5" />
          </g>
        </svg>
      </button>
      <button aria-label="Show applications" className="mt-auto mb-[22px]">
        <svg width="32" height="32" viewBox="0 0 32 32" fill="#f2eff0">
          {[0, 12, 24].map((y) => [0, 12, 24].map((x) => <rect key={`${x}-${y}`} x={x + 1} y={y + 1} width="6" height="6" rx="1.500" />))}
        </svg>
      </button>
    </nav>
  );
}

function TopBar() {
  return (
    <header className="grid h-[27px] shrink-0 grid-cols-[1fr_auto_1fr] items-center bg-[#131313] text-[15px] leading-[26px] text-[#e9e9e9]">
      <div className="flex items-center pb-px pl-[18px]">
        <button>Activities</button>
        <button className="ml-9 flex items-center gap-[7px]">
          <svg width="13" height="15" viewBox="0 0 13 15">
            <path d="M1 0h8l4 4v11H1a1 1 0 0 1-1-1V1a1 1 0 0 1 1-1z" fill="#dcdcdc" />
            <path d="M2.500 5h8v7h-8zM2.500 7.300h8M2.500 9.600h8M5.200 5v7M7.900 5v7" fill="none" stroke="#222" strokeWidth=".9" />
          </svg>
          LibreOffice Calc
        </button>
      </div>
      <div className="flex items-center gap-[18px] pb-px pl-[102px] text-[14px]">
        <button className="whitespace-pre">Apr 21  23:13</button>
        <svg width="14" height="16" viewBox="0 0 14 16" fill="none" stroke="#dcdcdc" strokeWidth="1.100">
          <path d="M.5 12.500h13M2 12c1.200-1.500 1.300-3 1.300-5.500C3.300 3 4.700 1 7 1s3.700 2 3.700 5.500c0 2.500.1 4 1.300 5.500" />
          <path d="M5 12V6.500C5 4.500 5.700 3.200 7 3.200s2 1.300 2 3.300V12" />
          <path d="M5.500 14.500h3" strokeWidth="2" />
        </svg>
      </div>
      <div className="flex items-center justify-end gap-[13px] pr-[18px]">
        <svg width="15" height="14" viewBox="0 0 15 14" fill="none" stroke="#e9e9e9">
          <path d="M0 4.500h3L7 .5v13L3 9.500H0z" fill="#f4f4f4" stroke="none" />
          <path d="M9 4.500q2 2.500 0 5M11.500 2.500q3.500 4.500 0 9" />
        </svg>
        <svg width="15" height="14" viewBox="0 0 15 14" fill="none" stroke="#e9e9e9" strokeWidth="1.300">
          <path d="M7.500 0v6.500M4.500 2a6 6 0 1 0 6 0" />
        </svg>
      </div>
    </header>
  );
}

function Sheet() {
  return (
    <table className="w-[1812px] table-fixed border-separate border-spacing-0 bg-white">
      <colgroup>
        <col className="w-[41px]" />
        {columns.map((c) => <col key={c} className="w-[77px]" />)}
      </colgroup>
      <thead>
        <tr className="h-5 text-[14px] leading-[19px] text-[#3d3d3d]">
          <td className="border-r border-b border-[#979797] bg-[#fafafa] p-0" />
          {columns.map((c) => (
            <th
              key={c}
              scope="col"
              className={`border-r border-b border-[#979797] p-0 pl-px text-center ${c === "F" ? "bg-[#e95420] font-bold text-white" : "bg-[#fafafa] font-normal"}`}
            >
              {c}
            </th>
          ))}
        </tr>
      </thead>
      <tbody>
        {Array.from({ length: 40 }, (_, r) => (
          <tr key={r} className="h-[18px] font-['DejaVu_Sans',sans-serif] text-[15px] leading-[17px] text-black">
            <th
              scope="row"
              className={`border-r border-b border-[#979797] p-0 text-center font-['Noto_Sans',sans-serif] text-[14px] ${r === 12 ? "bg-[#e95420] font-bold text-white" : "bg-[#fafafa] font-normal text-[#3d3d3d]"}`}
            >
              {r + 1}
            </th>
            {columns.map((c, i) => {
              const value = rows[r]?.[i] ?? "";
              const clipped = i === 0 && r > 0 && r < 11;
              return (
                <td key={c} className={`relative border-r border-b border-[#c0c0c0] p-0 pt-px leading-4 whitespace-nowrap ${r > 0 && i > 0 ? "pr-px text-right" : "pl-px"}`}>
                  {clipped ? <div className="h-4 w-[75px] overflow-hidden">{value}</div> : value}
                  {clipped && (
                    <svg width="4" height="7" viewBox="0 0 4 7" className="absolute top-[6px] right-0">
                      <path d="M0 0l4 3.500L0 7z" fill="#000" />
                      <path d="M0 2l2 1.500L0 5z" fill="#e02020" />
                    </svg>
                  )}
                  {r === 12 && c === "F" && (
                    <>
                      <input
                        aria-label="Cell F13"
                        defaultValue="=(F12-E12)/E12*100"
                        className="absolute top-0 left-0 z-10 h-[17px] w-[166px] bg-white pt-px pl-px leading-4 outline-none"
                      />
                      {/* text cursor hovering over the edited cell */}
                      <svg width="11" height="22" viewBox="0 0 11 22" className="absolute top-[6px] left-[35px] z-20" fill="none">
                        <path d="M1 2.500h9M5.500 2v18M1 20h9" stroke="#e4e4e4" strokeWidth="4" />
                        <path d="M2 2.500h3l.5.5.5-.5h3M5.500 3v16M2 19.500h7" stroke="#444" strokeWidth="1.600" />
                      </svg>
                    </>
                  )}
                </td>
              );
            })}
          </tr>
        ))}
      </tbody>
    </table>
  );
}

const sidebarDecks: { name: string; active?: boolean; icon: ReactNode }[] = [
  {
    name: "Properties",
    active: true,
    icon: (
      <>
        <rect x="4" y="4" width="16" height="7" rx="3.500" fill={ORANGE} />
        <circle cx="16.500" cy="7.500" r="2.800" fill="#fff" />
        <rect x="4" y="13" width="16" height="7" rx="3.500" fill={ORANGE} />
        <circle cx="7.500" cy="16.500" r="2.800" fill="#fff" />
      </>
    ),
  },
  {
    name: "Styles",
    icon: (
      <>
        <text x="11" y="12" fontSize="15" fontWeight="700" fill="#222">A</text>
        <path d="M4 9l4-3 7 4v5l-4 2-6-4z" fill="#fff" stroke="#555" />
        <path d="M7 16l-5 5" stroke="#f58b7a" strokeWidth="3" />
      </>
    ),
  },
  {
    name: "Gallery",
    icon: (
      <>
        <rect x="2.500" y="3.500" width="16" height="13" rx="1" fill="#d55bcb" stroke="#333" />
        <rect x="5.500" y="7.500" width="16" height="13" rx="1" fill="#d55bcb" stroke="#333" />
        <path d="M8 18l3-5 2 2 2-2 3 5z" fill="#fff" />
        <circle cx="17.500" cy="11" r="1.200" fill="#fff" />
      </>
    ),
  },
  {
    name: "Navigator",
    icon: (
      <>
        <circle cx="12" cy="12" r="9.500" fill="#4a7be8" stroke="#333" />
        <path d="M17 7l-3 7-7 3 3-7z" fill="#fff" />
        <path d="M17 7l-2.500 4-2-2z" fill="#e0485a" />
        <circle cx="12" cy="12" r="2.500" fill="#eee" />
      </>
    ),
  },
  {
    name: "Functions",
    icon: (
      <>
        <path d="M13 4.500h-2Q9 4.500 9 7v13M5 10.500h7" stroke={INK} strokeWidth="2.200" />
        <path d="M14.500 14.500l6 6M20.500 14.500l-6 6" stroke={INK} strokeWidth="2" />
      </>
    ),
  },
];

function Sidebar() {
  return (
    <aside className="relative flex w-[59px] shrink-0 flex-col items-center gap-2 border-l border-[#b5b5b5] bg-[#fafafa] pt-[5px] pl-px">
      <button aria-label="Sidebar settings" className="flex h-[34px] w-9 items-center justify-center pb-[3px]">
        <svg width="10" height="10" viewBox="0 0 10 10"><path d="M0 .5h10M0 5h10M0 9.500h10" stroke="#333" /></svg>
      </button>
      {sidebarDecks.map((deck) => (
        <button
          key={deck.name}
          aria-label={deck.name}
          className={`flex h-[34px] w-9 items-center justify-center rounded-md ${deck.active ? "border border-[#c2c2c2] bg-[#d6d6d6]" : ""}`}
        >
          <svg width="24" height="24" viewBox="0 0 24 24" fill="none" className="overflow-visible">{deck.icon}</svg>
        </button>
      ))}
      <button aria-label="Hide sidebar" className="absolute top-[409px] -left-px flex h-[73px] w-[7px] items-center justify-center bg-[#9a9a9a]">
        <svg width="5" height="8" viewBox="0 0 5 8"><path d="M0 0l5 4-5 4z" fill="#fff" /></svg>
      </button>
    </aside>
  );
}

const sheetNav: { name: string; color: string; d: string }[] = [
  { name: "First sheet", color: "#f7a184", d: "M0 1h1.500v14H0zM3 8l5-4v3h8v2H8v3z" },
  { name: "Previous sheet", color: "#a0a0a0", d: "M1 3h1.500v10H1zM2.500 8L9 3v10zM9 8l6.500-5v10z" },
  { name: "Next sheet", color: "#a0a0a0", d: "M13.500 3H15v10h-1.500zM.5 3L7 8l-6.500 5zM7 3l6.500 5L7 13z" },
  { name: "Last sheet", color: "#f7a184", d: "M14.500 1H16v14h-1.500zM13 8L8 4v3H0v2h8v3z" },
];

function StatusBar() {
  const cell = "flex h-[18px] shrink-0 items-center border-r border-[#d8d8d8]";
  return (
    <footer className="flex h-[21px] shrink-0 items-center border-t border-[#b5b5b5] bg-[#fafafa] pt-px text-[12px] text-[#3d3d3d]">
      <div className={`${cell} w-[218px] pl-[10px]`}>Sheet 1 of 1</div>
      <div className={`${cell} w-[303px]`} />
      <div className={`${cell} w-[257px] pl-2`}>PageStyle_Sheet1</div>
      <div className={`${cell} w-[258px] justify-center`}>English (Hong Kong)</div>
      <div className={`${cell} w-[68px]`} />
      <div className={`${cell} w-[29px] justify-center`}>
        <svg width="18" height="13" viewBox="0 0 18 13" fill="none">
          <rect x="1.500" y="3.500" width="8" height="6" stroke={ORANGE} />
          <path d="M12.500 1.500h5M12.500 11.500h5M15 2v10" stroke="#222" />
        </svg>
      </div>
      <div className={`${cell} w-[29px] justify-center`}>
        <svg width="14" height="14" viewBox="0 0 14 14">
          <path d="M5 1h4v6h2.500L7 12 2.500 7H5z" fill="#a4d13a" stroke="#444" />
          <path d="M2 13.500h9" stroke="#555" />
          <circle cx="12" cy="2.500" r="1.800" fill="#d01c33" />
        </svg>
      </div>
      <div className={`${cell} w-[29px]`} />
      <div className={`${cell} min-w-0 flex-1 justify-center`}>Average: ; Sum: 0</div>
      <div className={`${cell} w-[143px] gap-[6px] pl-2`}>
        <button aria-label="Zoom out"><svg width="10" height="10" viewBox="0 0 10 10"><path d="M1 5h8" stroke="#555" strokeWidth="2" /></svg></button>
        <input
          aria-label="Zoom"
          type="range"
          defaultValue={50}
          className="h-3 w-24 appearance-none bg-[linear-gradient(#8c8c8c,#8c8c8c)] bg-size-[100%_2px] bg-center bg-no-repeat [&::-webkit-slider-thumb]:size-[9px] [&::-webkit-slider-thumb]:appearance-none [&::-webkit-slider-thumb]:rounded-full [&::-webkit-slider-thumb]:border [&::-webkit-slider-thumb]:border-[#555] [&::-webkit-slider-thumb]:bg-white"
        />
        <button aria-label="Zoom in"><svg width="10" height="10" viewBox="0 0 10 10"><path d="M1 5h8M5 1v8" stroke="#555" strokeWidth="2" /></svg></button>
      </div>
      <div className="flex w-12 shrink-0 items-center justify-center">100%</div>
    </footer>
  );
}

export default function App() {
  return (
    <div className="flex h-screen w-full flex-col overflow-hidden font-['Noto_Sans','Noto_Sans_CJK_SC',sans-serif]">
      <TopBar />
      <div className="flex min-h-0 flex-1">
        <Dock />
        <main className="flex min-w-0 flex-1 flex-col bg-[#fafafa]">
          <div className="grid h-[37px] shrink-0 grid-cols-[1fr_auto_1fr] items-center border-b border-[#bdbdbd] bg-[#ebebeb]">
            <h1 className="col-start-2 text-[15px] font-bold text-[#3d3d3d]">SalesRep.xlsx - LibreOffice Calc</h1>
            <div className="flex justify-end gap-3 pr-[7px]">
              {["M3 9.500h7", "M3.500 5.500h5v6h-5zM6 3h5v6", "M3 3l7 7.500M10 3L3 10.500"].map((d, i) => (
                <button key={d} aria-label={["Minimize", "Restore", "Close"][i]} className="flex size-[22px] items-center justify-center rounded-full bg-[#dadada]">
                  <svg width="14" height="14" viewBox="0 0 14 14" fill="none"><path d={d} stroke="#333" strokeWidth="1.200" /></svg>
                </button>
              ))}
            </div>
          </div>

          <div className="flex h-[25px] shrink-0 items-center gap-[15px] border-b border-[#dedede] pr-[11px] pl-2 text-[15px] leading-6 text-[#3d3d3d]">
            {menus.map((m) => <button key={m}>{m}</button>)}
            <button aria-label="Close document" className="ml-auto"><CloseX size={9} color="#333" width={2} /></button>
          </div>

          <div className="flex h-[39px] shrink-0 items-center pb-[2px] pl-1">
            <ToolStrip items={standardBar} />
          </div>
          <div className="flex h-[39px] shrink-0 items-center pb-px pl-1">
            <Combo label="Font name" value="等线" className="w-[221px] italic" />
            <Combo label="Font size" value="11 pt" className="ml-2 w-[100px]" />
            <ToolStrip items={formatBar} />
          </div>

          <div className="flex min-h-0 flex-1">
            <div className="flex min-w-0 flex-1 flex-col">
              <div className="flex h-[39px] shrink-0 items-center pb-px pl-1">
                <Combo label="Name box" value="SUM" className="w-[173px]" />
                <div className="ml-1 h-[31px] w-px bg-[#dcdcdc]" />
                <button aria-label="Function wizard" className="ml-[10px]">
                  <svg width="14" height="16" viewBox="0 0 14 16" fill="none">
                    <path d="M7.500 1.500H6Q4 1.500 4 4v10M1.500 6h5" stroke="#222" strokeWidth="1.800" />
                    <path d="M8 9.500l4 4M12 9.500l-4 4" stroke="#555" strokeWidth="1.300" />
                  </svg>
                </button>
                <button aria-label="Cancel" className="ml-[10px]">
                  <svg width="15" height="15" viewBox="0 0 15 15"><circle cx="7.500" cy="7.500" r="7" fill="#c8102e" /><path d="M5 5l5 5M10 5l-5 5" stroke="#fff" strokeWidth="1.300" /></svg>
                </button>
                <button aria-label="Accept" className="ml-[10px]">
                  <svg width="15" height="15" viewBox="0 0 15 15" fill="none"><circle cx="7.500" cy="7.500" r="7" fill="#43a52c" /><path d="M4 7.500l2.500 3L11 5" stroke="#fff" strokeWidth="1.600" /></svg>
                </button>
                <input aria-label="Formula" defaultValue="=(F12-E12)/E12*100" className="ml-[15px] h-6 min-w-0 flex-1 border border-[#c2c2c2] bg-white pb-px pl-[6px] text-[14px] text-[#3d3d3d] outline-none" />
                <button aria-label="Expand formula bar" className="flex w-[22px] justify-center pr-[3px]"><Chevron /></button>
              </div>

              <InfoBar text="Help us make LibreOffice even better!" action="Get involved" />
              <InfoBar text="Your donations support our worldwide community." action="Donate" />

              <div className="flex min-h-0 flex-1">
                <div className="min-w-0 flex-1 overflow-hidden">
                  <Sheet />
                </div>
                <div className="flex w-3 shrink-0 flex-col">
                  <div className="flex h-[5px] items-center justify-center bg-[#b5b5b5]"><div className="h-px w-[6px] bg-black" /></div>
                  <div className="mt-[5px] ml-[3px] h-[47%] w-[6px] rounded-full bg-[#8b8b8b]" />
                </div>
              </div>

              <div className="flex h-3 shrink-0 items-center pr-3 pl-1">
                <div className="h-[6px] flex-9 rounded-full bg-[#8b8b8b]" />
                <div className="flex h-full flex-10 justify-end">
                  <div className="flex h-full w-[5px] items-center justify-center bg-[#b5b5b5]"><div className="h-2 w-px bg-black" /></div>
                </div>
              </div>

              <div className="flex h-[25px] shrink-0 items-center pl-[10px]">
                <div className="flex gap-[9px]">
                  {sheetNav.map((n) => (
                    <button key={n.name} aria-label={n.name}>
                      <svg width="16" height="16" viewBox="0 0 16 16"><path d={n.d} fill={n.color} /></svg>
                    </button>
                  ))}
                </div>
                <button aria-label="Add sheet" className="ml-4">
                  <svg width="16" height="20" viewBox="0 0 16 20">
                    <path d="M1.500.5h7.500l5 5v13H2.500a1.500 1.500 0 0 1-1.500-1.500V1.500z" fill="#fff" stroke="#4d4d4d" />
                    <path d="M9 .5v5h5" fill="none" stroke="#4d4d4d" />
                    <circle cx="11.500" cy="15.500" r="4" fill="#13882a" />
                    <path d="M9 15.500h5M11.500 13v5" stroke="#fff" strokeWidth="1.300" />
                  </svg>
                </button>
                <button className="ml-[10px] h-[25px] w-[65px] border-b-[3px] border-[#9a9a9a] bg-white pt-px text-[12px] font-bold text-[#3d3d3d]">Sheet1</button>
              </div>
            </div>
            <Sidebar />
          </div>
          <StatusBar />
        </main>
      </div>
    </div>
  );
}
